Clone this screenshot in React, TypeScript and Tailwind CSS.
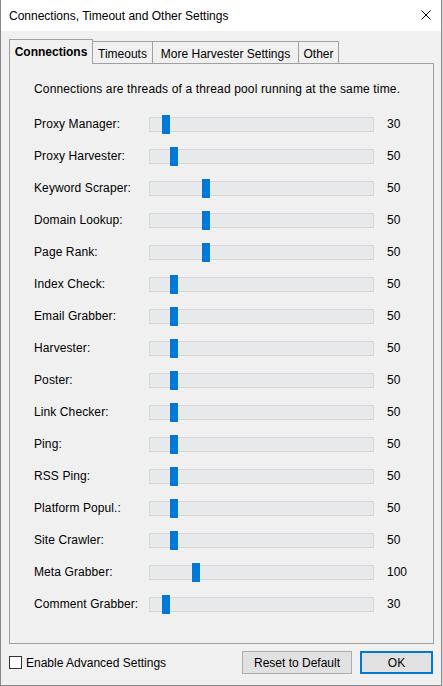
import React, { useState } from 'react';

type Slider = { label: string; value: number; offset: number };

const sliders: Slider[] = [
  { label: 'Proxy Manager:', value: 30, offset: 13 },
  { label: 'Proxy Harvester:', value: 50, offset: 21 },
  { label: 'Keyword Scraper:', value: 50, offset: 53 },
  { label: 'Domain Lookup:', value: 50, offset: 53 },
  { label: 'Page Rank:', value: 50, offset: 53 },
  { label: 'Index Check:', value: 50, offset: 21 },
  { label: 'Email Grabber:', value: 50, offset: 21 },
  { label: 'Harvester:', value: 50, offset: 21 },
  { label: 'Poster:', value: 50, offset: 21 },
  { label: 'Link Checker:', value: 50, offset: 21 },
  { label: 'Ping:', value: 50, offset: 21 },
  { label: 'RSS Ping:', value: 50, offset: 21 },
  { label: 'Platform Popul.:', value: 50, offset: 21 },
  { label: 'Site Crawler:', value: 50, offset: 21 },
  { label: 'Meta Grabber:', value: 100, offset: 43 },
  { label: 'Comment Grabber:', value: 30, offset: 13 },
];

const tabs = [
  { name: 'Connections', width: 'w-[84px]' },
  { name: 'Timeouts', width: 'w-[61px]' },
  { name: 'More Harvester Settings', width: 'w-[147px]' },
  { name: 'Other', width: 'w-[41px]' },
];

function SliderRow({ item }: { item: Slider }) {
  return (
    <div className="flex h-[32px] items-center">
      <div className="w-[115px] tracking-[0.1px]">{item.label}</div>
      <div className="relative h-[15px] w-[225px] border border-[#d6d6d6] bg-[#e7eaea]">
        {/* thumb */}
        <div
          className="absolute top-[-3px] h-[19px] w-[8px] bg-[#0078d7]"
          style={{ left: item.offset - 1 }}
        />
      </div>
      <div className="ml-[13px]">{item.value}</div>
    </div>
  );
}

export default function App() {
  const [active, setActive] = useState(0);
  const [advanced, setAdvanced] = useState(false);

  return (
    <div
      className="h-[686px] w-[443px] bg-[#d9d9d9] text-[12px] leading-[16px] text-black"
      style={{ fontFamily: '"Liberation Sans", Arial, sans-serif' }}
    >
      <div className="flex h-[686px] w-[442px] flex-col border-x border-b border-[#8a8a8a] bg-[#f0f0f0]">
        {/* Title bar */}
        <div className="flex h-[31px] items-center justify-between bg-white pl-[8px] pr-[9px]">
          <span className="text-[12px]">Connections, Timeout and Other Settings</span>
          <svg width="10" height="10" viewBox="0 0 10 10" className="mt-[-1px] mr-[1px]">
            <path d="M0.5 0.5 L9.5 9.5 M9.5 0.5 L0.5 9.5" stroke="#000" strokeWidth="1" />
          </svg>
        </div>

        {/* Tabs */}
        <div className="ml-[8px] mt-[8px] flex h-[24px] items-end">
          {tabs.map((t, i) =>
            i === active ? (
              <button
                key={t.name}
                onClick={() => setActive(i)}
                className={`relative z-10 -mb-px flex h-[25px] ${t.width} items-start justify-center border-x border-t border-[#a0a0a0] bg-[#f0f0f0] pt-[4px] font-bold`}
              >
                {t.name}
              </button>
            ) : (
              <button
                key={t.name}
                onClick={() => setActive(i)}
                className={`flex h-[22px] ${t.width} items-center justify-center border-x border-t border-[#a0a0a0] bg-[#f0f0f0] pt-[2px] -ml-px first:ml-0`}
              >
                {t.name}
              </button>
            )
          )}
        </div>

        {/* Panel */}
        <div className="ml-[8px] h-[581px] w-[425px] border border-[#a0a0a0] bg-[#f0f0f0] pl-[24px]">
          <div className="pt-[17px] tracking-[0.15px]">
            Connections are threads of a thread pool running at the same time.
          </div>
          <div className="mt-[11px]">
            {sliders.map((s) => (
              <SliderRow key={s.label} item={s} />
            ))}
          </div>
        </div>

        {/* Bottom bar */}
        <div className="ml-[8px] mr-[8px] mt-[7px] flex h-[23px] items-center">
          <label className="flex cursor-default items-center">
            <button
              onClick={() => setAdvanced(!advanced)}
              className="flex h-[13px] w-[13px] items-center justify-center border border-[#333] bg-white"
            >
              {advanced && (
                <svg width="9" height="9" viewBox="0 0 9 9">
                  <path d="M1 4.5 L3.5 7 L8 1.5" stroke="#000" strokeWidth="1.3" fill="none" />
                </svg>
              )}
            </button>
            <span className="ml-[4px]">Enable Advanced Settings</span>
          </label>
          <div className="ml-auto flex gap-[8px]">
            <button className="h-[23px] w-[110px] border border-[#adadad] bg-[#e1e1e1]">
              Reset to Default
            </button>
            <button className="h-[23px] w-[73px] border-2 border-[#0078d7] bg-[#e1e1e1]">
              OK
            </button>
          </div>
        </div>
      </div>
    </div>
  );
}
